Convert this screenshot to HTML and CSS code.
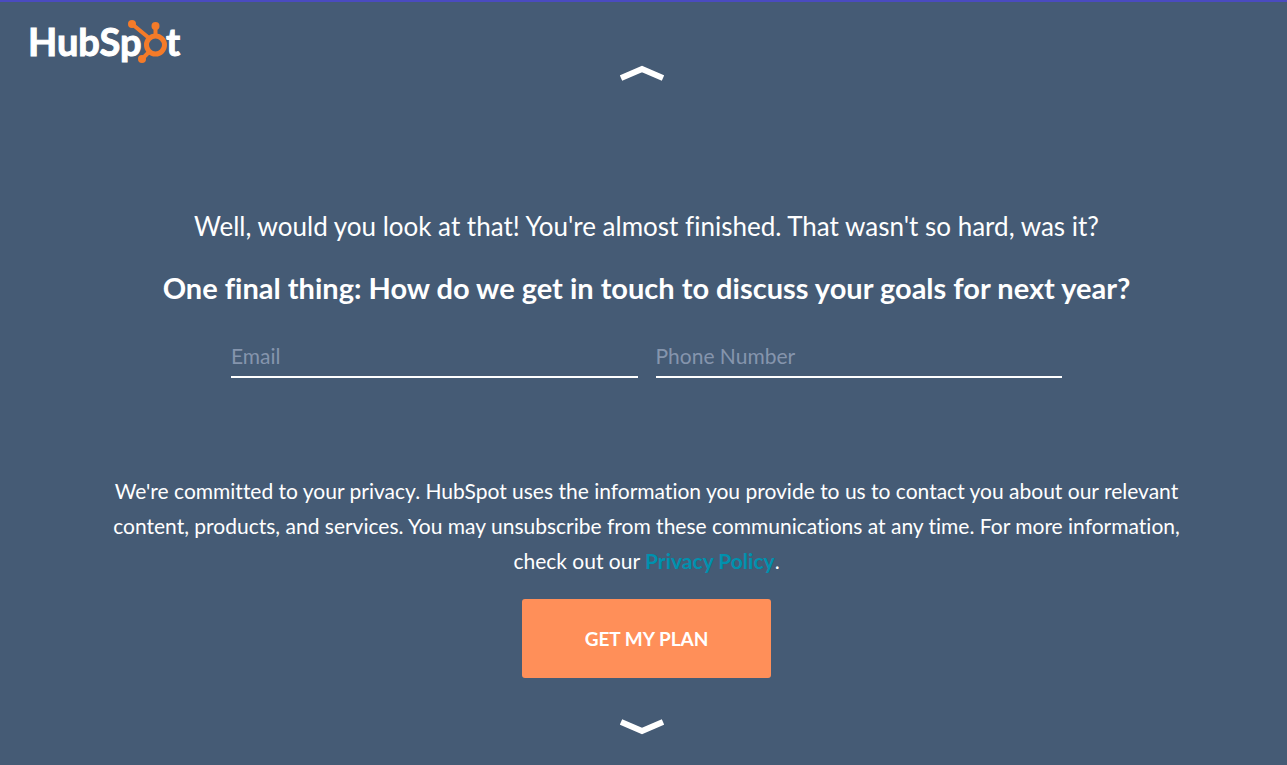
FILE: index.html
```html
<!DOCTYPE html>
<html lang="en">
<head>
    <meta charset="utf-8">
    <title>HubSpot</title>
    <meta name="viewport" content="width=device-width, initial-scale=1.0">
    <link rel="stylesheet" href="styles.css">
</head>
<body>
    <header class="header">
        <a class="logo" href="#" aria-label="HubSpot">
            <svg width="160" height="56" viewBox="-4 -4 160 56">
                <text class="logo-text" x="-2" y="36">HubSp</text>
                <text class="logo-text" x="136" y="36">t</text>
                <g class="sprocket">
                    <path d="M102 4 L119 18 M125.500 7 V18 M120 31 L112 39"/>
                    <circle class="ring" cx="125.500" cy="25" r="9"/>
                    <circle class="dot" cx="102" cy="4" r="4"/>
                    <circle class="dot" cx="125.500" cy="6" r="4"/>
                    <circle class="dot" cx="112" cy="39" r="4"/>
                </g>
            </svg>
        </a>
    </header>

    <button class="arrow" type="button" aria-label="Previous">
        <svg width="44" height="16" viewBox="0 0 44 16"><path d="M1 13 L22 4 L43 13"/></svg>
    </button>

    <main class="content">
        <p class="intro">Well, would you look at that! You're almost finished. That wasn't so hard, was it?</p>
        <h1 class="title">One final thing: How do we get in touch to discuss your goals for next year?</h1>
        <form class="contact-form" action="#">
            <div class="fields">
                <input type="email" name="email" placeholder="Email" aria-label="Email">
                <input type="tel" name="phone" placeholder="Phone Number" aria-label="Phone Number">
            </div>
            <p class="privacy">We're committed to your privacy. HubSpot uses the information you provide to us to contact you about our relevant content, products, and services. You may unsubscribe from these communications at any time. For more information, check out our <a href="#">Privacy Policy</a>.</p>
            <button class="submit" type="submit">GET MY PLAN</button>
        </form>
    </main>

    <button class="arrow" type="button" aria-label="Next">
        <svg width="44" height="16" viewBox="0 0 44 16"><path d="M1 3 L22 12 L43 3"/></svg>
    </button>
</body>
</html>
```
FILE: styles.css
```css
:root {
    --bg-color: #455b75;
    --text-color: #ffffff;
    --placeholder: #8595ad;
    --orange: #f47b29;
    --button-bg: #ff8f59;
    --link: #0091ae;
}

* {
    box-sizing: border-box;
}

body {
    margin: 0;
    min-height: 100vh;
    border-top: 2px solid #4a4bc0;
    background-color: var(--bg-color);
    color: var(--text-color);
    font-family: Lato, "Open Sans", sans-serif;
    font-variant-ligatures: none;
    display: flex;
    flex-direction: column;
}

.header {
    display: flex;
    padding: 14px 26px 0;
    height: 63px;
}

.logo-text {
    font-size: 38px;
    font-weight: bold;
    fill: var(--text-color);
    stroke: var(--text-color);
    stroke-width: 1px;
}

.sprocket path,
.ring {
    fill: none;
    stroke: var(--orange);
    stroke-width: 4px;
}

.ring {
    stroke-width: 5px;
}

.dot {
    fill: var(--orange);
}

.arrow {
    align-self: center;
    padding: 0;
    margin-right: 3px;
    border: none;
    background: none;
    cursor: pointer;
}

.arrow svg {
    display: block;
}

.arrow path {
    fill: none;
    stroke: var(--text-color);
    stroke-width: 6px;
}

.content {
    width: 100%;
    max-width: 1126px;
    margin: 0 auto;
    padding: 127px 16px 41px 22px;
    text-align: center;
}

.intro {
    margin: 0;
    font-size: 26px;
    line-height: 36px;
}

.title {
    margin: 26px 0 0;
    font-size: 29px;
    line-height: 36px;
}

.fields {
    display: flex;
    gap: 18px;
    max-width: 831px;
    margin: 29px auto 95px;
}

.fields input {
    flex: 1;
    min-width: 0;
    height: 43px;
    padding: 0;
    border: none;
    border-bottom: 2px solid var(--text-color);
    background: none;
    color: var(--text-color);
    font-family: inherit;
    font-size: 21px;
}

.fields input:focus {
    outline: none;
}

.fields input::placeholder {
    color: var(--placeholder);
}

.privacy {
    margin: 0 0 21px;
    font-size: 21px;
    line-height: 35px;
}

.privacy a {
    color: var(--link);
    font-weight: bold;
    text-decoration: none;
}

.submit {
    width: 249px;
    height: 79px;
    border: none;
    border-radius: 3px;
    background-color: var(--button-bg);
    color: var(--text-color);
    font-family: inherit;
    font-size: 19px;
    font-weight: bold;
    cursor: pointer;
}
```
